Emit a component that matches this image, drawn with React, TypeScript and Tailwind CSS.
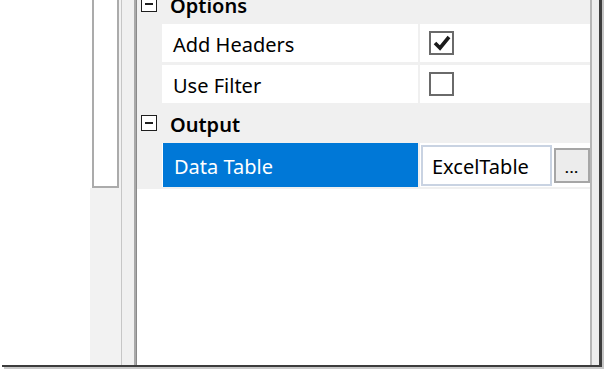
import React from 'react';

const font = { fontFamily: '"Noto Sans", "Open Sans", sans-serif' };

function Minus() {
  return (
    <span className="flex h-[16px] w-[16px] items-center justify-center border-[1.5px] border-[#1e1e1e] bg-white">
      <span className="h-[1.5px] w-[8px] bg-[#1e1e1e]" />
    </span>
  );
}

function Category({ label, className = '' }: { label: string; className?: string }) {
  return (
    <div className={`flex h-[40px] items-center bg-[#f0f0f0] pl-[4px] ${className}`}>
      <Minus />
      <span className="ml-[13px] pt-[3px] text-[20px] font-semibold text-black">{label}</span>
    </div>
  );
}

function CheckBox({ checked }: { checked: boolean }) {
  return (
    <span className="flex h-[24px] w-[25px] items-center justify-center border-2 border-[#6a6a6a] bg-white">
      {checked && (
        <svg width="18" height="16" viewBox="0 0 18 16">
          <path d="M2 8 L7 13 L16 2" fill="none" stroke="#1a1a1a" strokeWidth="3.6" strokeLinejoin="miter" />
        </svg>
      )}
    </span>
  );
}

function Row({ name, children, selected = false, h = 'h-[38px]' }: { name: string; children: React.ReactNode; selected?: boolean; h?: string }) {
  return (
    <div className={`flex ${h}`}>
      <div className="w-[25px] bg-[#f0f0f0]" />
      <div
        className={`flex items-center pl-[11px] pt-[3px] text-[20px] ${
          selected ? 'ml-px w-[255px] bg-[#0078d7] text-white' : 'w-[256px] bg-white text-black'
        }`}
      >
        {name}
      </div>
      <div className="w-[2px] bg-[#f0f0f0]" />
      <div className="flex flex-1 items-center bg-white pl-[9px]">{children}</div>
    </div>
  );
}

export default function App() {
  return (
    <div className="flex h-[369px] w-[604px] flex-col overflow-hidden bg-white" style={font}>
      <div className="flex h-[365px]">
        <div className="w-[90px] bg-white" />
        <div className="flex w-[31px] flex-col bg-[#f2f2f2]">
          <div className="flex h-[188px]">
            <div className="w-[2px] bg-white" />
            <div className="w-[27px] border-x-2 border-b-2 border-[#ababab] bg-white" />
          </div>
        </div>
        <div className="w-px bg-[#c6c6c6]" />
        <div className="w-[12px] bg-[#f0f0f0]" />
        <div className="w-[2px] bg-[#a9a9a9]" />
        <div className="w-px bg-[#8a8a8a]" />

        <div className="flex w-[453px] flex-col bg-white">
          <Category label="Options" className="-mt-[16px]" />
          <div className="flex flex-col gap-[3px] bg-[#f0f0f0]">
            <Row name="Add Headers">
              <CheckBox checked />
            </Row>
            <Row name="Use Filter">
              <CheckBox checked={false} />
            </Row>
          </div>
          <Category label="Output" />
          <Row name="Data Table" selected h="h-[44px]">
            <div className="-ml-[8px] flex items-center gap-[2px]">
              <div className="flex h-[41px] w-[131px] items-center border-2 border-[#c9d3e2] bg-white pl-[9px] pt-[3px] text-[20px] text-black">
                ExcelTable
              </div>
              <div className="flex h-[35px] w-[36px] items-end justify-center border-2 border-[#a6a6a6] bg-[#ececec] pb-[6px]">
                <span className="text-[13px] font-bold leading-none tracking-[1px] text-black">...</span>
              </div>
            </div>
          </Row>
          <div className="flex h-[2px]">
            <div className="w-[25px] bg-[#f0f0f0]" />
            <div className="flex-1 bg-[#f0f0f0]" />
          </div>
        </div>

        <div className="w-[2px] bg-[#b4b4b4]" />
        <div className="w-[7px] bg-[#ececec]" />
        <div className="w-[3px] bg-[#3c3c3c]" />
        <div className="w-[2px] bg-[#c4c4c4]" />
      </div>
      <div className="flex h-[2px]">
        <div className="w-[2px] bg-white" />
        <div className="w-[600px] bg-[#3c3c3c]" />
        <div className="flex-1 bg-[#c4c4c4]" />
      </div>
      <div className="flex h-[2px]">
        <div className="w-[4px] bg-white" />
        <div className="flex-1 bg-[#c8c8c8]" />
      </div>
    </div>
  );
}
